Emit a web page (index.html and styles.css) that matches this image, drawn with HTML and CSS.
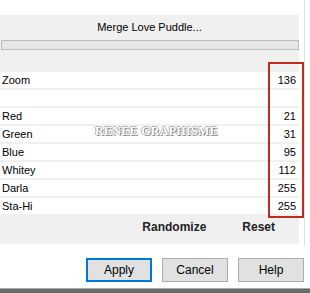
FILE: index.html
```html
<!DOCTYPE html>
<html lang="en">
<head>
    <meta charset="UTF-8">
    <title>Merge Love Puddle</title>
    <link rel="stylesheet" href="styles.css">
</head>
<body>
    <div class="frame">
        <div class="panel">
            <div class="title">Merge Love Puddle...</div>
            <div class="progress"></div>
            <div class="rows">
                <div class="row"><span>Zoom</span><span>136</span></div>
                <div class="row"></div>
                <div class="row"><span>Red</span><span>21</span></div>
                <div class="row"><span>Green</span><span>31</span></div>
                <div class="row"><span>Blue</span><span>95</span></div>
                <div class="row"><span>Whitey</span><span>112</span></div>
                <div class="row"><span>Darla</span><span>255</span></div>
                <div class="row"><span>Sta-Hi</span><span>255</span></div>
            </div>
            <div class="actions">
                <span>Randomize</span>
                <span>Reset</span>
            </div>
        </div>
    </div>

    <div class="buttons">
        <button class="btn default">Apply</button>
        <button class="btn">Cancel</button>
        <button class="btn">Help</button>
    </div>
    <div class="bottom-bar"></div>

    <!-- watermark and highlight box lie over the list -->
    <div class="watermark">RENEE GRAPHISME</div>
    <div class="highlight"></div>
</body>
</html>
```

FILE: styles.css
```css
body {
    margin: 0;
    width: 310px;
    height: 293px;
    background: #fff;
    font-family: "Liberation Sans", Arial, sans-serif;
    font-size: 11px;
    color: #000;
    position: relative;
    overflow: hidden;
}
.frame {
    width: 304px;
    padding-top: 15px;
    padding-bottom: 2px;
    border-right: 1px solid #e2e2e2;
}
.panel {
    width: 299px;
    height: 229px;
    background: #f0f0f0;
}
.title {
    height: 25px;
    line-height: 25px;
    text-align: center;
    font-size: 11px;
}
.progress {
    height: 8px;
    margin-left: 1px;
    background: #e6e6e6;
    border: 1px solid #bcbcbc;
}
.rows {
    margin-top: 22px;
    display: flex;
    flex-direction: column;
    gap: 2px;
}
.row {
    height: 16px;
    background: #fff;
    display: flex;
    justify-content: space-between;
    align-items: center;
    padding: 0 3px 0 2px;
}
.actions {
    height: 26px;
    display: flex;
    justify-content: flex-end;
    align-items: center;
    gap: 36px;
    padding-right: 24px;
    font-size: 12px;
    font-weight: bold;
    color: #222;
}
.buttons {
    display: flex;
    justify-content: flex-end;
    gap: 10px;
    padding-right: 6px;
    margin-top: 12px;
}
.btn {
    width: 66px;
    height: 24px;
    background: #e1e1e1;
    border: 1px solid #adadad;
    font-family: "Liberation Sans", Arial, sans-serif;
    font-size: 12px;
    color: #000;
    padding: 0;
}
.btn.default {
    border: 2px solid #0078d7;
}
.bottom-bar {
    position: absolute;
    left: 0;
    right: 0;
    bottom: 0;
    height: 4px;
    background: #6a6a6a;
    border-top: 1px solid #a8a8a8;
}
.watermark {
    position: absolute;
    left: 95px;
    top: 124px;
    font-family: "Liberation Serif", "Times New Roman", serif;
    font-size: 12px;
    font-weight: bold;
    letter-spacing: 0.3px;
    color: #fff;
    text-shadow: 1px 1px 0 #8a8a8a, -1px 0 0 #b0b0b0, 0 -1px 0 #b0b0b0;
}
.highlight {
    position: absolute;
    left: 268px;
    top: 62px;
    width: 32px;
    height: 152px;
    border: 2px solid #c42b1c;
}
```
